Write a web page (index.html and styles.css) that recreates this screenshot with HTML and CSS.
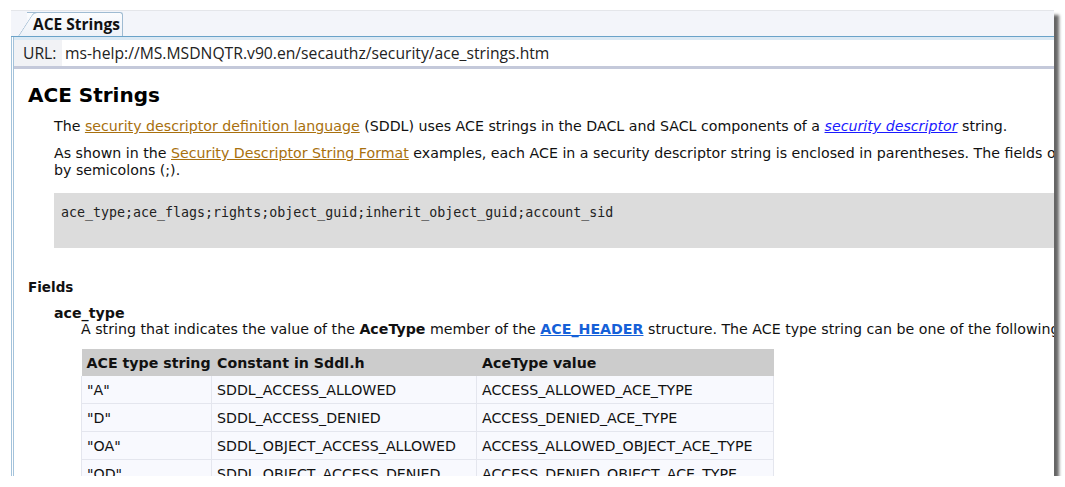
FILE: index.html
```html
<!DOCTYPE html>
<html>
<head>
  <meta charset="utf-8">
  <title>ACE Strings</title>
  <link rel="stylesheet" href="styles.css">
</head>
<body class="body">
  <div class="window">
    <div class="tabstrip">
      <div class="tab">ACE Strings</div>
    </div>
    <div class="frame">
      <div class="urlbar">
        <span class="urllabel">URL:</span>
        <span class="urlvalue">ms-help://MS.MSDNQTR.v90.en/secauthz/security/ace_strings.htm</span>
      </div>
      <div class="page">
        <h1 class="title">ACE Strings</h1>
        <p class="para">The <a class="link" href="#">security descriptor definition language</a> (SDDL) uses ACE strings in the DACL and SACL components of a <a class="ilink" href="#">security descriptor</a> string.</p>
        <p class="para">As shown in the <a class="link" href="#">Security Descriptor String Format</a> examples, each ACE in a security descriptor string is enclosed in parentheses. The fields of the ACE are in the following order and are separated<br>by semicolons (;).</p>
        <pre class="code">ace_type;ace_flags;rights;object_guid;inherit_object_guid;account_sid</pre>
        <h3 class="fields">Fields</h3>
        <div class="term">ace_type</div>
        <div class="desc">
          <p class="line">A string that indicates the value of the <b>AceType</b> member of the <a class="blink" href="#">ACE_HEADER</a> structure. The ACE type string can be one of the following strings defined in Sddl.h.</p>
          <table class="grid">
            <thead>
              <tr>
                <th class="c1">ACE type string</th>
                <th class="c2">Constant in Sddl.h</th>
                <th class="c3">AceType value</th>
              </tr>
            </thead>
            <tbody>
              <tr><td>"A"</td><td>SDDL_ACCESS_ALLOWED</td><td>ACCESS_ALLOWED_ACE_TYPE</td></tr>
              <tr><td>"D"</td><td>SDDL_ACCESS_DENIED</td><td>ACCESS_DENIED_ACE_TYPE</td></tr>
              <tr><td>"OA"</td><td>SDDL_OBJECT_ACCESS_ALLOWED</td><td>ACCESS_ALLOWED_OBJECT_ACE_TYPE</td></tr>
              <tr><td>"OD"</td><td>SDDL_OBJECT_ACCESS_DENIED</td><td>ACCESS_DENIED_OBJECT_ACE_TYPE</td></tr>
              <tr><td>"AU"</td><td>SDDL_AUDIT</td><td>SYSTEM_AUDIT_ACE_TYPE</td></tr>
            </tbody>
          </table>
        </div>
      </div>
    </div>
  </div>
</body>
</html>
```

FILE: styles.css
```css
.body {
  margin: 0;
  background-color: white;
}

/* outer window with its drop shadow */
.window {
  margin: 10px 0 0 11px;
  width: 1043px;
  height: 466px;
  overflow: hidden;
  background-color: white;
  box-shadow: 5px 5px 3px rgba(0, 0, 0, 0.6);
  display: flex;
  flex-direction: column;
}

.tabstrip {
  height: 25px;
  flex: none;
  background-color: #f3f5fa;
  border-top: 1px solid #e4e6ea;
  border-bottom: 1px solid #6aa3c9;
  padding-left: 4px;
  display: flex;
  align-items: flex-end;
}

.tab {
  position: relative;
  height: 23px;
  padding: 0 2px 0 6px;
  margin-left: 12px;
  font-family: "Open Sans", "Noto Sans", sans-serif;
  font-weight: bold;
  font-size: 15.5px;
  line-height: 23px;
  color: #111;
  background: linear-gradient(#fbfcfe, #eef2f8);
  border: 1px solid #9fbbd2;
  border-left: none;
  border-bottom: none;
  border-top-right-radius: 3px;
  z-index: 1;
}

/* slanted left edge of the tab */
.tab::before {
  content: "";
  position: absolute;
  left: -9px;
  top: -1px;
  bottom: 0;
  width: 18px;
  background: linear-gradient(#fbfcfe, #eef2f8);
  border-left: 1px solid #9fbbd2;
  border-top: 1px solid #9fbbd2;
  border-top-left-radius: 4px;
  transform: skewX(-33deg);
  transform-origin: bottom left;
  z-index: -1;
}

.frame {
  flex: 1;
  border-left: 3px double #a4c3db;
  display: flex;
  flex-direction: column;
  min-height: 0;
}

.urlbar {
  flex: none;
  height: 26px;
  border-top: 3px solid #dbe9f4;
  border-bottom: 3px solid #c4c9da;
  display: flex;
  align-items: stretch;
  font-family: "Open Sans", "Noto Sans", sans-serif;
  font-size: 15.7px;
  color: #222;
}

.urllabel {
  width: 48px;
  padding-left: 9px;
  box-sizing: border-box;
  background-color: #f1f2f5;
  line-height: 26px;
}

.urlvalue {
  flex: 1;
  padding-left: 3px;
  line-height: 26px;
  background-color: white;
}

.page {
  padding: 0 0 0 14px;
  font-family: "DejaVu Sans", Verdana, sans-serif;
  font-size: 14.2px;
  color: #111;
  white-space: nowrap;
}

.title {
  margin: 14px 0 0 0;
  font-size: 20px;
  line-height: 24px;
  font-weight: bold;
  color: #000;
}

.para {
  margin: 11px 0 0 26px;
  line-height: 17px;
}

.para + .para {
  margin-top: 10px;
}

.link {
  color: #a8700e;
}

.ilink {
  color: #1a1aff;
  font-style: italic;
}

.blink {
  color: #1560d8;
  font-weight: bold;
}

.code {
  margin: 14px 0 0 26px;
  padding: 12px 7px 27px 7px;
  line-height: 16px;
  background-color: #dcdcdc;
  font-family: "DejaVu Sans Mono", monospace;
  font-size: 13.3px;
  color: #222;
}

.fields {
  margin: 31px 0 0 0;
  font-size: 13.5px;
  line-height: 17px;
  font-weight: bold;
}

.term {
  margin: 9px 0 0 26px;
  font-size: 14.2px;
  line-height: 16px;
  font-weight: bold;
}

.desc {
  margin-left: 53px;
}

.line {
  margin: 0;
  line-height: 17px;
}

.grid {
  margin-top: 11px;
  width: 692px;
  table-layout: fixed;
  border-collapse: collapse;
  white-space: nowrap;
}

.grid th {
  box-sizing: border-box;
  background-color: #cccccc;
  text-align: left;
  font-weight: bold;
  height: 27px;
  padding: 0 5px;
  border-right: 1px solid #cccccc;
}

.grid td {
  background-color: #f8f9fe;
  height: 27px;
  padding: 0 5px;
  border: 1px solid #e4e6ee;
  border-top: none;
  overflow: hidden;
}

.c1 {
  width: 130px;
}

.c2 {
  width: 265px;
}

.c3 {
  width: 297px;
}
```
